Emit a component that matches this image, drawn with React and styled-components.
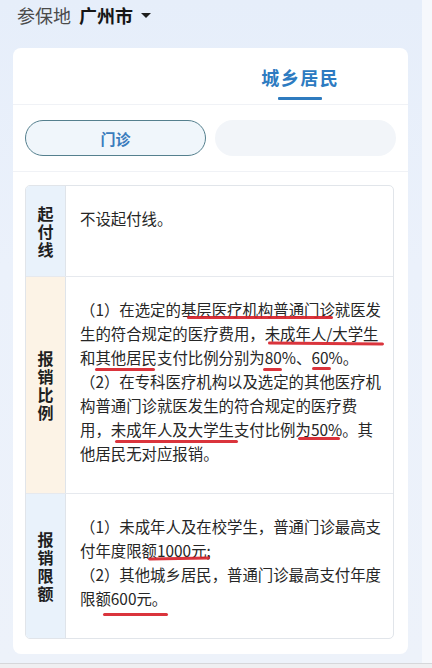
import React from "react";
import styled, { createGlobalStyle } from "styled-components";

const Global = createGlobalStyle`
  html, body { margin: 0; padding: 0; }
  body {
    width: 432px;
    height: 668px;
    overflow: hidden;
    font-family: "Noto Sans CJK SC", "Noto Sans", sans-serif;
    background: #f3f5f8;
  }
  * { box-sizing: border-box; }
`;

const Screen = styled.div`
  width: 432px;
  height: 668px;
  display: flex;
  flex-direction: column;
`;

const Upper = styled.div`
  display: flex;
  height: 663px;
`;

const Main = styled.main`
  width: 422px;
  height: 100%;
  display: flex;
  flex-direction: column;
  background: linear-gradient(180deg, #e6eefa 0%, #ebf1fb 40%, #edf2fa 100%);
  padding-bottom: 9px;
`;

const SideStrip = styled.div`
  flex: 1;
  background: #f6f8fc;
`;

const BottomBar = styled.div`
  flex: 1;
  border-top: 1px solid #d6d7da;
  background: #efeff1;
`;

const Header = styled.header`
  height: 48px;
  display: flex;
  align-items: flex-start;
  padding: 3px 0 0 17px;
  font-size: 18px;
  line-height: 24px;
`;

const PlaceLabel = styled.span`
  color: #4a4a4a;
  font-weight: 400;
`;

const City = styled.span`
  color: #161616;
  font-weight: 700;
  margin-left: 8px;
`;

const Caret = styled.span`
  display: inline-block;
  width: 0;
  height: 0;
  margin: 10px 0 0 8px;
  border-left: 5px solid transparent;
  border-right: 5px solid transparent;
  border-top: 5px solid #1e1e1e;
`;

const Card = styled.section`
  flex: 1;
  margin: 0 14px 0 13px;
  background: #ffffff;
  border-radius: 8px;
  display: flex;
  flex-direction: column;
`;

const TabRow = styled.div`
  display: grid;
  grid-template-columns: 1fr 1fr;
  padding-right: 12px;
  height: 57px;
  border-bottom: 1px solid #f0f2f6;
`;

const Tab = styled.div`
  display: flex;
  flex-direction: column;
  align-items: center;
  padding-top: 17px;
  font-size: 18px;
  line-height: 24px;
  font-weight: 700;
  letter-spacing: 1.5px;
  color: ${(p) => (p.$active ? "#2d7bc1" : "#555")};
`;

const TabBar = styled.div`
  width: 44px;
  height: 3px;
  margin-top: 8px;
  border-radius: 1px;
  background: #2e7bbf;
`;

const PillRow = styled.div`
  display: grid;
  grid-template-columns: 1fr 1fr;
  gap: 9px;
  padding: 15px 12px 15px 12px;
  border-bottom: 1px solid #f0f2f6;
`;

const Pill = styled.div`
  height: 36px;
  border-radius: 18px;
  display: flex;
  align-items: center;
  justify-content: center;
  font-size: 15px;
  font-weight: 700;
  color: #3a7cbd;
  background: ${(p) => (p.$active ? "#f0f6fb" : "#f2f5f9")};
  border: ${(p) => (p.$active ? "1.5px solid #55808e" : "none")};
`;

const TableWrap = styled.div`
  flex: 1;
  padding: 13px 14px 15px 12px;
`;

const Table = styled.div`
  border: 1px solid #e1e5ea;
  border-radius: 5px;
  overflow: hidden;
  display: flex;
  flex-direction: column;
`;

const Row = styled.div`
  display: flex;
  min-height: ${(p) => p.$min || 0}px;
  & + & {
    border-top: 1px solid #e6e9ee;
  }
`;

const Label = styled.div`
  width: 40px;
  flex: none;
  display: flex;
  flex-direction: column;
  align-items: center;
  justify-content: center;
  background: ${(p) => (p.$tone === "warm" ? "#fcf3e6" : "#e9f2fb")};
  border-right: 1px solid #dfe4ea;
  font-size: 16px;
  line-height: 18px;
  font-weight: 700;
  color: #1f1f1f;
`;

const Content = styled.div`
  flex: 1;
  padding: 20px 0 28px 14px;
  font-size: 15.4px;
  line-height: 24px;
  color: #262626;
`;

const Line = styled.div`
  white-space: nowrap;
`;

const Mark = styled.span`
  position: relative;
  &::after {
    content: "";
    position: absolute;
    left: ${(p) => p.$l || 0}px;
    right: ${(p) => p.$r || 0}px;
    top: calc(50% + ${(p) => p.$drop || 8}px - 1.5px);
    height: 3px;
    border-radius: 2px;
    background: #d7232b;
    transform: rotate(${(p) => p.$rot || 0}deg);
    opacity: 0.92;
  }
`;

function Chars({ text }) {
  return text.split("").map((c, i) => <span key={i}>{c}</span>);
}

export default function App() {
  return (
    <>
      <Global />
      <Screen>
        <Upper>
          <Main>
            <Header>
              <PlaceLabel>参保地</PlaceLabel>
              <City>广州市</City>
              <Caret />
            </Header>
            <Card>
              <TabRow>
                <Tab />
                <Tab $active>
                  城乡居民
                  <TabBar />
                </Tab>
              </TabRow>
              <PillRow>
                <Pill $active>门诊</Pill>
                <Pill />
              </PillRow>
              <TableWrap>
                <Table>
                  <Row $min={90}>
                    <Label>
                      <Chars text="起付线" />
                    </Label>
                    <Content>
                      <Line>不设起付线。</Line>
                    </Content>
                  </Row>
                  <Row>
                    <Label $tone="warm">
                      <Chars text="报销比例" />
                    </Label>
                    <Content>
                      <Line>
                        （1）在选定的
                        <Mark $l={6} $r={2} $drop={8}>基层医疗机构普通门诊</Mark>
                        就医发
                      </Line>
                      <Line>
                        生的符合规定的医疗费用，
                        <Mark $l={3} $r={-5} $drop={10} $rot={0.6}>未成年人/大学生</Mark>
                      </Line>
                      <Line>
                        和<Mark $l={0} $r={2} $drop={12}>其他居民</Mark>支付比例分别为
                        <Mark $l={-2} $r={0} $drop={12}>80</Mark>%、
                        <Mark $l={1} $r={-2} $drop={11}>60</Mark>%。
                      </Line>
                      <Line>（2）在专科医疗机构以及选定的其他医疗机</Line>
                      <Line>构普通门诊就医发生的符合规定的医疗费</Line>
                      <Line>
                        用，<Mark $l={4} $r={-4} $drop={12}>未成年人及大学生</Mark>支付比例
                        <Mark $l={2} $r={2} $drop={9}>为50%</Mark>。其
                      </Line>
                      <Line>他居民无对应报销。</Line>
                    </Content>
                  </Row>
                  <Row>
                    <Label>
                      <Chars text="报销限额" />
                    </Label>
                    <Content>
                      <Line>（1）未成年人及在校学生，普通门诊最高支</Line>
                      <Line>
                        付年度限<Mark $l={6} $r={-3} $drop={8} $rot={-0.8}>额1000元</Mark>;
                      </Line>
                      <Line>（2）其他城乡居民，普通门诊最高支付年度</Line>
                      <Line>
                        限<Mark $l={8} $r={-1} $drop={16}>额600元。</Mark>
                      </Line>
                    </Content>
                  </Row>
                </Table>
              </TableWrap>
            </Card>
          </Main>
          <SideStrip />
        </Upper>
        <BottomBar />
      </Screen>
    </>
  );
}
